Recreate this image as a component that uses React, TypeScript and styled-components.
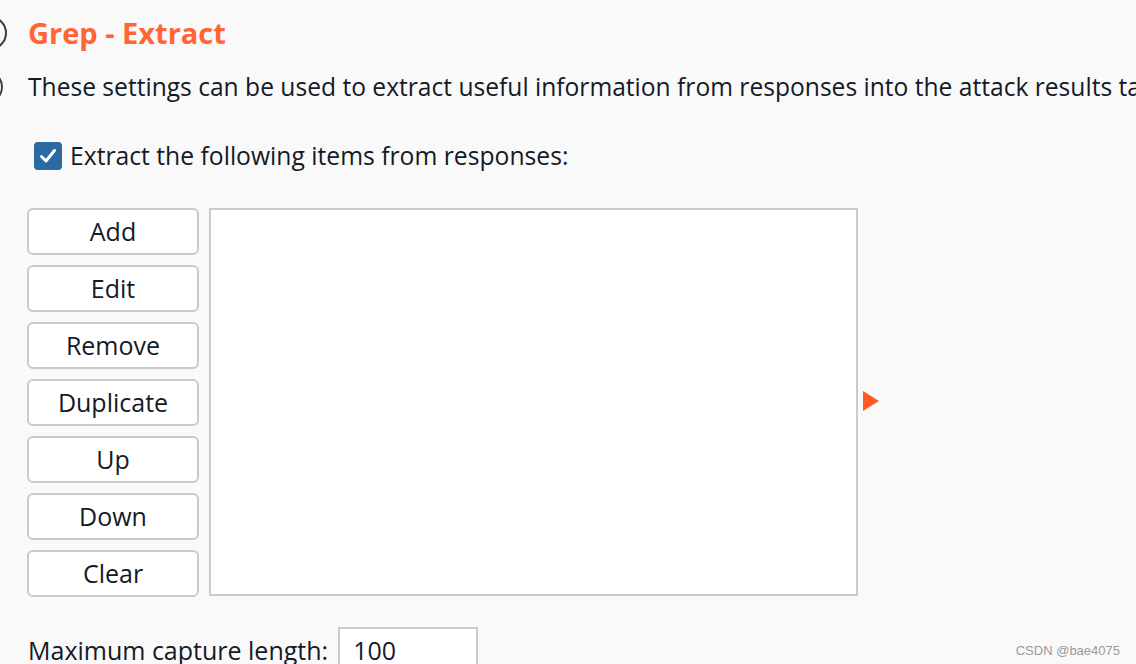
import React from 'react';
import styled, { createGlobalStyle } from 'styled-components';

const GlobalStyle = createGlobalStyle`
  html, body {
    margin: 0;
    padding: 0;
    background: #f9f9f9;
  }
  * {
    box-sizing: border-box;
  }
`;

const Page = styled.div`
  position: relative;
  width: 1136px;
  height: 664px;
  overflow: hidden;
  padding: 15px 0 0 28px;
  font-family: 'Open Sans', 'Liberation Sans', sans-serif;
  color: #141a26;
  background: #f9f9f9;
`;

const HeadRow = styled.div<{ $top?: number }>`
  display: flex;
  align-items: center;
  white-space: nowrap;
  margin-top: ${({ $top = 0 }) => $top}px;
`;

const HelpIcon = styled.span<{ $right: number }>`
  flex: none;
  width: 34px;
  height: 34px;
  margin-left: ${({ $right }) => $right - 62}px;
  margin-right: ${({ $right }) => 28 - $right}px;
  border: 2px solid #3c3c3c;
  border-radius: 50%;
`;

const Title = styled.h2`
  margin: 0;
  font-size: 29px;
  line-height: 36px;
  font-weight: 700;
  color: #ff6633;
`;

const Description = styled.p`
  margin: 0;
  font-size: 24.6px;
  line-height: 30px;
`;

const CheckRow = styled.label`
  display: flex;
  align-items: center;
  gap: 8px;
  margin-top: 38px;
  padding-left: 6px;
  font-size: 24.7px;
  line-height: 28px;
  white-space: nowrap;
`;

const CheckBox = styled.span`
  width: 28px;
  height: 28px;
  border-radius: 4px;
  background: #2c6aa2;
  display: flex;
  align-items: center;
  justify-content: center;
`;

const Editor = styled.div`
  display: flex;
  gap: 10px;
  margin-top: 38px;
  margin-left: -1px;
`;

const ButtonColumn = styled.div`
  display: flex;
  flex-direction: column;
  gap: 10px;
`;

const ActionButton = styled.button`
  width: 172px;
  height: 47px;
  padding: 0;
  border: 2px solid #cdc9c9;
  border-radius: 6px;
  background: #ffffff;
  font-family: inherit;
  font-size: 25px;
  line-height: 43px;
  color: #141a26;
`;

const ListBox = styled.div`
  width: 649px;
  height: 388px;
  border: 2px solid #cbcbcb;
  background: #ffffff;
`;

const Arrow = styled.span`
  align-self: center;
  margin-left: -5px;
  margin-top: -3px;
  width: 0;
  height: 0;
  border-top: 10.5px solid transparent;
  border-bottom: 10.5px solid transparent;
  border-left: 16px solid #ff5a26;
`;

const BottomRow = styled.div`
  display: flex;
  align-items: flex-start;
  gap: 10px;
  margin-top: 30px;
  font-size: 25px;
  white-space: nowrap;
`;

const LengthLabel = styled.span`
  line-height: 46px;
`;

const LengthInput = styled.div`
  width: 140px;
  height: 46px;
  border: 2px solid #cbcbcb;
  background: #ffffff;
  padding-left: 13px;
  line-height: 42px;
`;

const Watermark = styled.span`
  position: absolute;
  right: 16px;
  bottom: 6px;
  font-family: 'Liberation Sans', Arial, sans-serif;
  font-size: 13px;
  color: #9a9a9a;
`;

const buttons = ['Add', 'Edit', 'Remove', 'Duplicate', 'Up', 'Down', 'Clear'];

const App: React.FC = () => (
  <>
    <GlobalStyle />
    <Page>
      <HeadRow>
        <HelpIcon $right={7} />
        <Title>Grep - Extract</Title>
      </HeadRow>
      <HeadRow $top={19}>
        <HelpIcon $right={3} />
        <Description>
          These settings can be used to extract useful information from responses into the attack results table.
        </Description>
      </HeadRow>

      <CheckRow>
        <CheckBox>
          <svg width="22" height="22" viewBox="0 0 22 22">
            <path d="M4.5 11.5 L9 16 L17.5 5.5" fill="none" stroke="#fff" strokeWidth="3" strokeLinecap="round" strokeLinejoin="round" />
          </svg>
        </CheckBox>
        Extract the following items from responses:
      </CheckRow>

      <Editor>
        <ButtonColumn>
          {buttons.map((b) => (
            <ActionButton key={b}>{b}</ActionButton>
          ))}
        </ButtonColumn>
        <ListBox />
        <Arrow />
      </Editor>

      <BottomRow>
        <LengthLabel>Maximum capture length:</LengthLabel>
        <LengthInput>100</LengthInput>
      </BottomRow>

      <Watermark>CSDN @bae4075</Watermark>
    </Page>
  </>
);

export default App;
